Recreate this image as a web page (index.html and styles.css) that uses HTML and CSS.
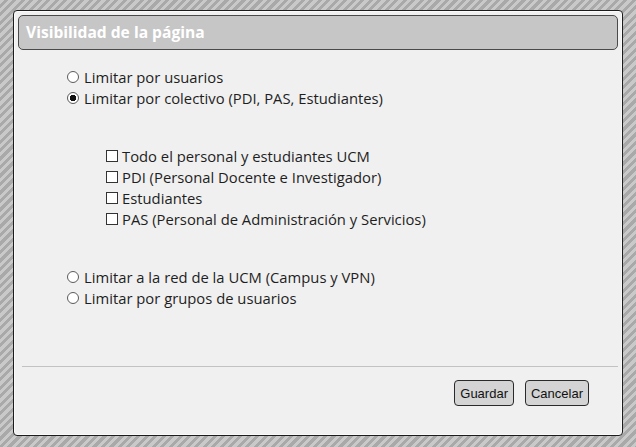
FILE: index.html
```html
<!DOCTYPE html>
<html lang="es">
<head>
  <meta charset="UTF-8">
  <meta name="viewport" content="width=device-width, initial-scale=1.0">
  <title>Visibilidad de la página</title>
  <link rel="stylesheet" href="styles.css">
</head>
<body>
  <div class="dialog">
    <div class="dialog-title">Visibilidad de la página</div>

    <form class="dialog-body">
      <div class="options">
        <label class="option"><input type="radio" name="vis" value="usuarios"> Limitar por usuarios</label>
        <label class="option"><input type="radio" name="vis" value="colectivo" checked> Limitar por colectivo (PDI, PAS, Estudiantes)</label>
      </div>

      <div class="groups">
        <label class="option"><input type="checkbox" name="todos"> Todo el personal y estudiantes UCM</label>
        <label class="option"><input type="checkbox" name="pdi"> PDI (Personal Docente e Investigador)</label>
        <label class="option"><input type="checkbox" name="est"> Estudiantes</label>
        <label class="option"><input type="checkbox" name="pas"> PAS (Personal de Administración y Servicios)</label>
      </div>

      <div class="options">
        <label class="option"><input type="radio" name="vis" value="red"> Limitar a la red de la UCM (Campus y VPN)</label>
        <label class="option"><input type="radio" name="vis" value="grupos"> Limitar por grupos de usuarios</label>
      </div>
    </form>

    <div class="dialog-footer">
      <button type="button">Guardar</button>
      <button type="button">Cancelar</button>
    </div>
  </div>
</body>
</html>
```

FILE: styles.css
```css
html, body {
  height: 100%;
}

body {
  margin: 0;
  font-family: "Open Sans", "Noto Sans", sans-serif;
  background: repeating-linear-gradient(135deg, #c9c9c9 0, #c9c9c9 3px, #a9a9a9 3px, #a9a9a9 6px);
  overflow: hidden;
}

.dialog {
  margin: 10px 0 0 13px;
  width: 600px;
  height: 416px;
  padding: 4px;
  background: #f0f0f0;
  border: 1px solid #1c1c1c;
  border-radius: 4px;
  box-shadow: inset 0 0 0 1px #fafafa;
  display: flex;
  flex-direction: column;
}

.dialog-title {
  height: 33px;
  line-height: 33px;
  padding-left: 7px;
  background: #c6c6c6;
  border: 1px solid #4a4a4a;
  border-radius: 5px;
  color: #fff;
  font-weight: bold;
  font-size: 15.6px;
}

.dialog-body {
  flex: 1;
  margin: 0;
  padding: 16px 0 0 49px;
  color: #1e1e1e;
  font-size: 14.8px;
}

.options,
.groups {
  display: flex;
  flex-direction: column;
}

.groups {
  margin: 37px 0 37px 39px;
}

.option {
  display: flex;
  align-items: center;
  height: 21px;
}

.option input {
  appearance: none;
  -webkit-appearance: none;
  width: 12px;
  height: 12px;
  margin: 0 4px 0 0;
  background: #fff;
  border: 1px solid #5a5a5a;
  flex: none;
}

.option input[type="radio"] {
  border-radius: 50%;
  margin-right: 5px;
}

.option input[type="radio"]:checked {
  background: radial-gradient(circle, #111 0, #111 3px, #fff 3.5px);
}

.option input[type="checkbox"] {
  border-color: #333;
}

.dialog-footer {
  margin: 0 0 25px 4px;
  padding: 13px 29px 0 0;
  border-top: 1px solid #c2c2c2;
  display: flex;
  justify-content: flex-end;
  gap: 11px;
}

.dialog-footer button {
  height: 26px;
  padding: 0 5px;
  font-family: "Liberation Sans", Arial, sans-serif;
  font-size: 13px;
  color: #111;
  background: #d4d4d4;
  border: 1px solid #2a2a2a;
  border-radius: 4px;
  cursor: pointer;
}

.dialog-footer button:hover {
  background: #c8c8c8;
}
```
